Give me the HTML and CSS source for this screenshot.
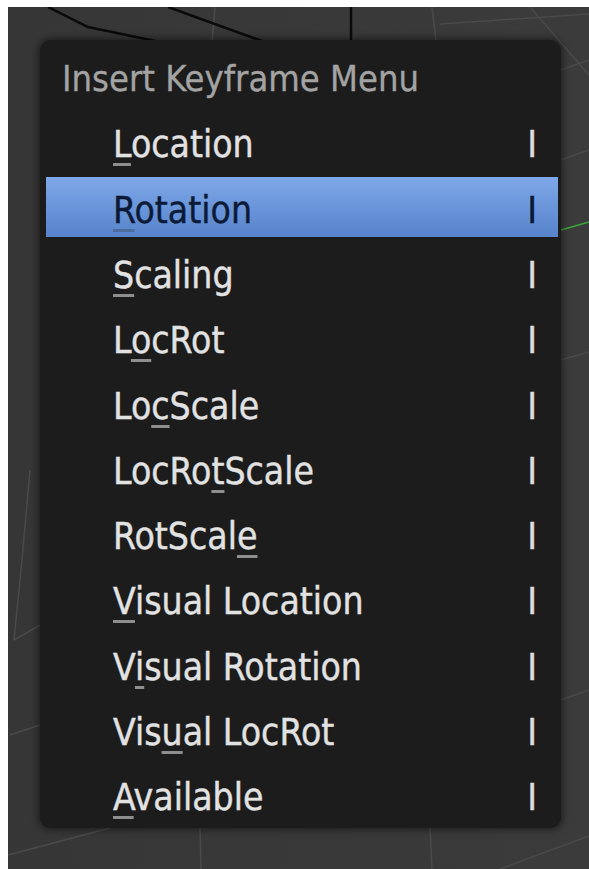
FILE: index.html
```html
<!DOCTYPE html>
<html lang="en">
<head>
<meta charset="utf-8">
<title>Insert Keyframe Menu</title>
<link rel="stylesheet" href="styles.css">
</head>
<body>
<div class="viewport">
  <svg class="mesh" viewBox="8 7 581 862" width="581" height="862" aria-hidden="true">
    <g class="wire">
      <path d="M215 7 L212 42"/>
      <path d="M432 7 L436 40"/>
      <path d="M440 24 L589 14"/>
      <path d="M530 7 L589 75"/>
      <path d="M561 70 L589 60"/>
      <path d="M561 160 L589 150"/>
      <path d="M561 360 L589 352"/>
      <path d="M561 700 L589 690"/>
      <path d="M30 470 L22 560 L14 640"/>
      <path d="M14 640 L40 625"/>
      <path d="M10 735 L40 725"/>
      <path d="M8 855 L110 828"/>
      <path d="M200 828 L201 869"/>
      <path d="M430 828 L432 869"/>
      <path d="M500 869 L589 836"/>
    </g>
    <g class="edge">
      <path d="M48 7 L88 27 L160 42"/>
      <path d="M168 7 L270 44"/>
      <path d="M351 7 L351 42"/>
    </g>
    <path class="axis" d="M561 230 L589 222"/>
  </svg>

  <div class="menu">
    <div class="menu-title">Insert Keyframe Menu</div>
    <ul class="menu-list">
      <li class="item"><span class="label"><u>L</u>ocation</span><span class="key">I</span></li>
      <li class="item active"><span class="label"><u>R</u>otation</span><span class="key">I</span></li>
      <li class="item"><span class="label"><u>S</u>caling</span><span class="key">I</span></li>
      <li class="item"><span class="label">L<u>o</u>cRot</span><span class="key">I</span></li>
      <li class="item"><span class="label">Lo<u>c</u>Scale</span><span class="key">I</span></li>
      <li class="item"><span class="label">LocRo<u>t</u>Scale</span><span class="key">I</span></li>
      <li class="item"><span class="label">RotScal<u>e</u></span><span class="key">I</span></li>
      <li class="item"><span class="label"><u>V</u>isual Location</span><span class="key">I</span></li>
      <li class="item"><span class="label">V<u>i</u>sual Rotation</span><span class="key">I</span></li>
      <li class="item"><span class="label">Vis<u>u</u>al LocRot</span><span class="key">I</span></li>
      <li class="item"><span class="label"><u>A</u>vailable</span><span class="key">I</span></li>
    </ul>
  </div>
</div>
</body>
</html>
```

FILE: styles.css
```css
html, body {
  margin: 0;
  padding: 0;
  background: #ffffff;
}

body {
  width: 589px;
  height: 869px;
  overflow: hidden;
  font-family: "DejaVu Sans Condensed", "DejaVu Sans", sans-serif;
}

/* 3D viewport area behind the popup */
.viewport {
  position: relative;
  margin: 7px 0 0 8px;
  width: 581px;
  height: 862px;
  background: linear-gradient(90deg, #363636 0%, #3b3b3b 100%);
  padding: 33px 0 0 32px;
  box-sizing: border-box;
}

.mesh {
  position: absolute;
  left: 0;
  top: 0;
}

.mesh .wire path {
  fill: none;
  stroke: #4a4a4a;
  stroke-width: 1.5;
}

.mesh .edge path {
  fill: none;
  stroke: #0a0a0a;
  stroke-width: 2.5;
}

.mesh .axis {
  fill: none;
  stroke: #3aa83a;
  stroke-width: 1.5;
}

/* popup menu */
.menu {
  position: relative;
  width: 521px;
  height: 788px;
  background: #1c1c1c;
  border-radius: 11px;
  box-shadow: 0 0 7px 2px rgba(0, 0, 0, 0.45);
  display: flex;
  flex-direction: column;
}

.menu-title {
  height: 69.7px;
  display: flex;
  align-items: center;
  padding: 8px 0 0 22px;
  box-sizing: border-box;
  font-size: 36px;
  color: #a3a3a3;
  -webkit-text-stroke: 0.3px currentColor;
}

.menu-list {
  list-style: none;
  margin: 0;
  padding: 0;
}

.item {
  height: 65.3px;
  margin: 0 3px 0 6px;
  padding: 5px 21px 0 67px;
  box-sizing: border-box;
  display: flex;
  align-items: center;
  justify-content: space-between;
  font-size: 37px;
  color: #e2e2e2;
  -webkit-text-stroke: 0.4px currentColor;
  position: relative;
}

.item u {
  text-decoration: underline;
  text-decoration-thickness: 3px;
  text-underline-offset: 6px;
  text-decoration-color: #8e8e8e;
}

.key {
  color: #dcdcdc;
}

.item.active {
  background: linear-gradient(180deg, #7ea8e8 0%, #6a95d9 50%, #5783ca 100%);
  background-size: 100% 60px;
  background-position: 0 2px;
  background-repeat: no-repeat;
  color: #0b1a36;
}

.item.active .key {
  color: #0b1a36;
}

.item.active u {
  text-decoration-color: #4d6c9e;
}
```
